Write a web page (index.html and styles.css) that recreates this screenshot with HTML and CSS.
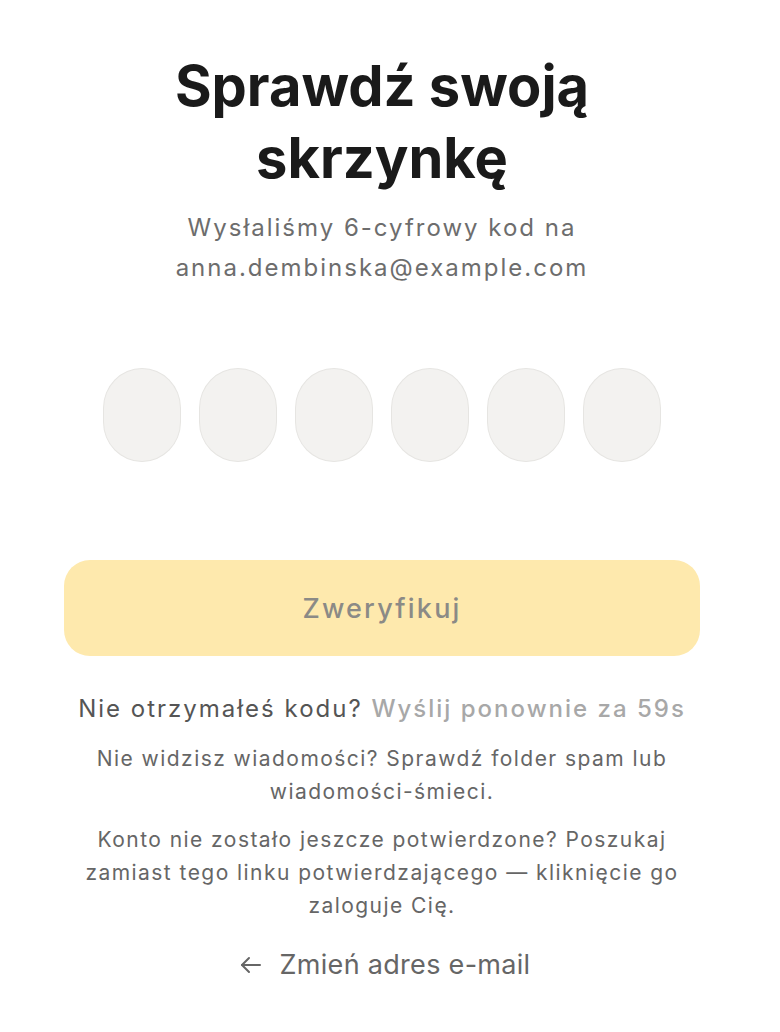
FILE: index.html
```html
<!DOCTYPE html>
<html lang="pl">
<head>
<meta charset="utf-8">
<title>Sprawdź swoją skrzynkę</title>
<link rel="stylesheet" href="styles.css">
</head>
<body>
<main class="page">
  <h1 class="title">Sprawdź swoją skrzynkę</h1>
  <p class="subtitle">Wysłaliśmy 6-cyfrowy kod na<br>anna.dembinska@example.com</p>
  <div class="otp">
    <input class="otp-cell" type="text" maxlength="1" aria-label="Cyfra 1">
    <input class="otp-cell" type="text" maxlength="1" aria-label="Cyfra 2">
    <input class="otp-cell" type="text" maxlength="1" aria-label="Cyfra 3">
    <input class="otp-cell" type="text" maxlength="1" aria-label="Cyfra 4">
    <input class="otp-cell" type="text" maxlength="1" aria-label="Cyfra 5">
    <input class="otp-cell" type="text" maxlength="1" aria-label="Cyfra 6">
  </div>
  <button class="verify" type="button" disabled>Zweryfikuj</button>
  <p class="resend">Nie otrzymałeś kodu? <span class="resend-timer">Wyślij ponownie za 59s</span></p>
  <p class="help help-first">Nie widzisz wiadomości? Sprawdź folder spam lub wiadomości-śmieci.</p>
  <p class="help help-second">Konto nie zostało jeszcze potwierdzone? Poszukaj zamiast tego linku potwierdzającego — kliknięcie go zaloguje Cię.</p>
  <a class="back" href="#">
    <svg class="back-icon" width="24" height="24" viewBox="0 0 24 24" fill="none" stroke="currentColor" stroke-width="2" stroke-linecap="round" stroke-linejoin="round" aria-hidden="true"><path d="M21 12H3"/><path d="M10 5l-7 7 7 7"/></svg>
    <span>Zmień adres e-mail</span>
  </a>
</main>
</body>
</html>
```

FILE: styles.css
```css
html, body {
  margin: 0;
  padding: 0;
  background: #ffffff;
}

body {
  font-family: Inter, "Noto Sans", "DejaVu Sans", sans-serif;
  color: #1a1a1a;
}

.page {
  width: 636px;
  margin-left: 64px;
  padding-top: 50px;
  display: flex;
  flex-direction: column;
  align-items: center;
  text-align: center;
}

.title {
  margin: 0;
  font-size: 56px;
  line-height: 72px;
  font-weight: 700;
  letter-spacing: 0;
  color: #1a1a1a;
  width: 480px;
}

.subtitle {
  margin: 14px 0 0;
  font-size: 24px;
  line-height: 40px;
  letter-spacing: 2px;
  color: #6d6d6d;
}

.otp {
  margin-top: 80px;
  display: flex;
  gap: 18px;
}

.otp-cell {
  box-sizing: border-box;
  width: 78px;
  height: 94px;
  padding: 0;
  border: 1.5px solid #e6e5e2;
  border-radius: 39px / 40px;
  background: #f3f2f0;
  font: inherit;
  font-size: 32px;
  text-align: center;
  outline: none;
}

.verify {
  margin-top: 98px;
  width: 636px;
  height: 96px;
  border: none;
  border-radius: 26px;
  background: #fee9ad;
  color: #8b8a86;
  font-family: inherit;
  font-size: 27px;
  font-weight: 500;
  letter-spacing: 2.2px;
}

.resend {
  margin: 37px 0 0;
  font-size: 24px;
  line-height: 32px;
  letter-spacing: 2px;
  color: #555555;
}

.resend-timer {
  color: #a8a8a8;
  font-weight: 500;
}

.help {
  margin: 0;
  font-size: 21px;
  line-height: 33px;
  letter-spacing: 1.45px;
  color: #666666;
}

.help-first {
  margin-top: 17px;
}

.help-second {
  margin-top: 15px;
}

.back {
  margin-top: 25px;
  padding-left: 5px;
  display: flex;
  align-items: center;
  gap: 17px;
  font-size: 27px;
  line-height: 36px;
  letter-spacing: 0.3px;
  color: #666666;
  text-decoration: none;
}

.back-icon {
  width: 24px;
  height: 24px;
}
```
